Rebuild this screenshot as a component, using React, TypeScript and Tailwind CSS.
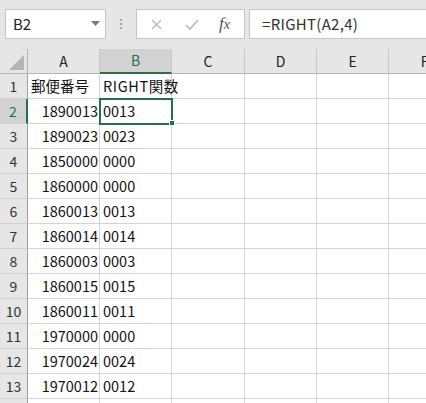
import React from "react";

const font = { fontFamily: '"Noto Sans CJK JP", "Noto Sans", sans-serif' };

const cols = [
  { key: "A", w: "w-[72px]" },
  { key: "B", w: "w-[72px]" },
  { key: "C", w: "w-[73px]" },
  { key: "D", w: "w-[72px]" },
  { key: "E", w: "w-[72px]" },
  { key: "F", w: "w-[72px]" },
];

const data: [string, string][] = [
  ["郵便番号", "RIGHT関数"],
  ["1890013", "0013"],
  ["1890023", "0023"],
  ["1850000", "0000"],
  ["1860000", "0000"],
  ["1860013", "0013"],
  ["1860014", "0014"],
  ["1860003", "0003"],
  ["1860015", "0015"],
  ["1860011", "0011"],
  ["1970000", "0000"],
  ["1970024", "0024"],
  ["1970012", "0012"],
  ["", ""],
];

function Toolbar() {
  return (
    <div className="flex h-[49px] items-start bg-[#e6e6e6] pt-[9px]">
      {/* Name box */}
      <div className="ml-[5px] flex h-[30px] w-[101px] items-center justify-between border border-[#c6c6c6] bg-white pl-[7px] pr-[5px]">
        <span className="text-[15px] text-[#222]">B2</span>
        <svg width="9" height="6" viewBox="0 0 9 6">
          <path d="M0 0 L9 0 L4.5 5 Z" fill="#7a7a7a" />
        </svg>
      </div>
      {/* Dots */}
      <div className="ml-[14px] mt-[10px] flex w-[3px] flex-col gap-[2px]">
        <div className="h-[2px] w-[2px] bg-[#a8a8a8]" />
        <div className="h-[2px] w-[2px] bg-[#a8a8a8]" />
        <div className="h-[2px] w-[2px] bg-[#a8a8a8]" />
      </div>
      {/* Buttons */}
      <div className="ml-[13px] flex h-[30px] w-[109px] items-center border border-[#c6c6c6] bg-white">
        <svg className="ml-[14px]" width="11" height="11" viewBox="0 0 11 11">
          <path d="M1 1 L10 10 M10 1 L1 10" stroke="#b8b8b8" strokeWidth="1.3" />
        </svg>
        <svg className="ml-[23px]" width="14" height="11" viewBox="0 0 14 11">
          <path d="M1 6 L5 10 L13 1" stroke="#b8b8b8" strokeWidth="1.6" fill="none" />
        </svg>
        <span
          className="ml-[20px] text-[17px] italic text-[#555]"
          style={{ fontFamily: '"Liberation Serif", serif' }}
        >
          f<span className="text-[14px]">x</span>
        </span>
      </div>
      {/* Formula */}
      <div className="ml-[4px] flex h-[30px] flex-1 items-center border border-r-0 border-[#c6c6c6] bg-white pl-[12px]">
        <span className="text-[15px] tracking-[0.3px] text-[#333]">=RIGHT(A2,4)</span>
      </div>
    </div>
  );
}

function Grid() {
  return (
    <div className="relative bg-white">
      {/* Header row */}
      <div className="flex h-[25px] bg-[#e6e6e6]">
        <div className="relative w-[28px] shrink-0 border-r border-b border-[#b5b5b5]">
          <svg className="absolute bottom-[3px] right-[3px]" width="15" height="15" viewBox="0 0 15 15">
            <path d="M15 0 L15 15 L0 15 Z" fill="#b4b4b4" />
          </svg>
        </div>
        {cols.map((c) => (
          <div
            key={c.key}
            className={`${c.w} shrink-0 border-r border-[#c8c8c8] flex items-center justify-center text-[14px] ${
              c.key === "B"
                ? "bg-[#d2d2d2] text-[#217346] border-b-2 border-b-[#217346]"
                : "text-[#222] border-b border-b-[#b5b5b5]"
            }`}
          >
            {c.key}
          </div>
        ))}
      </div>
      {/* Rows */}
      {data.map((row, i) => {
        const n = i + 1;
        const active = n === 2;
        return (
          <div key={n} className="flex h-[25px]">
            <div
              className={`w-[28px] shrink-0 flex items-center justify-center text-[14px] border-b border-[#d0d0d0] ${
                active
                  ? "bg-[#d2d2d2] text-[#217346] border-r-2 border-r-[#217346]"
                  : "bg-[#e6e6e6] text-[#333] border-r border-r-[#9e9e9e]"
              }`}
            >
              {n < 14 ? n : ""}
            </div>
            {cols.map((c, ci) => {
              const v = ci === 0 ? row[0] : ci === 1 ? row[1] : "";
              const right = ci === 0 && n > 1;
              return (
                <div
                  key={c.key}
                  className={`${c.w} shrink-0 border-r border-b border-[#d4d4d4] flex items-center overflow-visible whitespace-nowrap text-[14.5px] text-[#111] ${
                    right ? "justify-end pr-[1px]" : "pl-[3px]"
                  } ${n === 1 && ci === 1 ? "tracking-[0.6px]" : ""}`}
                >
                  {v}
                </div>
              );
            })}
          </div>
        );
      })}
      {/* Active cell */}
      <div className="pointer-events-none absolute left-[99px] top-[49px] h-[27px] w-[74px] border-2 border-[#217346]" />
      <div className="pointer-events-none absolute left-[169px] top-[71px] h-[6px] w-[6px] border border-white bg-[#217346]" />
    </div>
  );
}

export default function App() {
  return (
    <div className="h-[403px] w-[426px] overflow-hidden bg-white" style={font}>
      <Toolbar />
      <Grid />
    </div>
  );
}
